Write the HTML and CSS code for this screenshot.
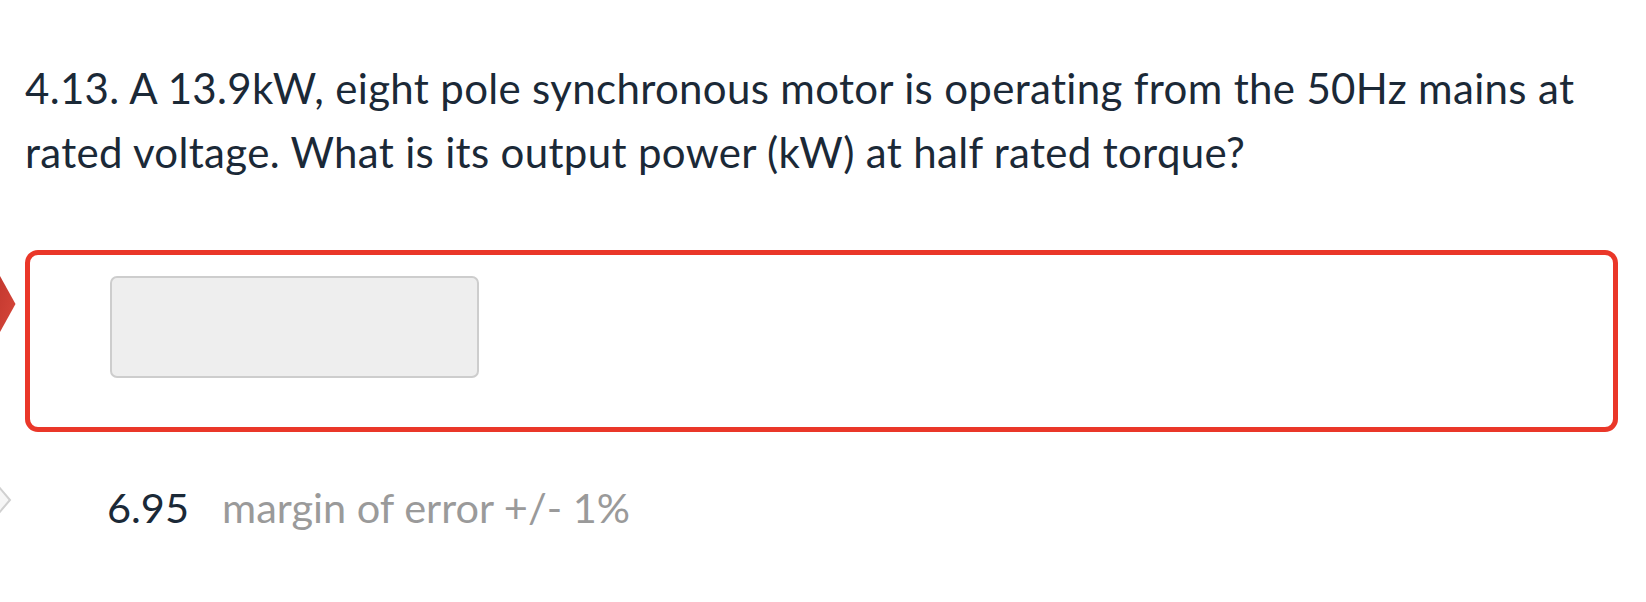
FILE: index.html
```html
<!DOCTYPE html>
<html>
<head>
<meta charset="utf-8">
<link rel="stylesheet" href="styles.css">
</head>
<body>
<div class="page">
  <div class="question">4.13. A 13.9kW, eight pole synchronous motor is operating from the 50Hz mains at rated voltage. What is its output power (kW) at half rated torque?</div>
  <div class="answer-wrap">
    <svg class="arrow-wrong" width="18" height="60" viewBox="0 0 18 60">
      <defs>
        <linearGradient id="rg" x1="0" y1="0" x2="1" y2="1">
          <stop offset="0" stop-color="#c4392f"/>
          <stop offset="1" stop-color="#d7473b"/>
        </linearGradient>
      </defs>
      <polygon points="0,1 15.5,29 0,57" fill="url(#rg)"/>
    </svg>
    <div class="answer-box">
      <div class="input"></div>
    </div>
  </div>
  <div class="correct-row">
    <svg class="arrow-correct" width="14" height="32" viewBox="0 0 14 32">
      <polygon points="-2,1 10,15 -2,29" fill="#f6f6f6" stroke="#d0d0d0" stroke-width="2"/>
    </svg>
    <span class="value">6.95</span>
    <span class="margin">margin of error +/- 1%</span>
  </div>
</div>
</body>
</html>
```

FILE: styles.css
```css
html, body {
  margin: 0;
  padding: 0;
  background: #ffffff;
}
body {
  font-family: Lato, "Open Sans", sans-serif;
  color: #1b2937;
}
.page {
  padding: 56px 28px 0 25px;
}
.question {
  font-size: 42px;
  letter-spacing: 0.33px;
  line-height: 64px;
}
.answer-wrap {
  position: relative;
  margin-top: 66px;
}
.arrow-wrong {
  position: absolute;
  left: -25px;
  top: 25px;
  display: block;
}
.answer-box {
  box-sizing: border-box;
  width: 1593px;
  height: 182px;
  border: 5px solid #ea3729;
  border-radius: 13px;
  padding: 21px 0 0 80px;
}
.input {
  box-sizing: border-box;
  width: 369px;
  height: 102px;
  background: #eeeeee;
  border: 2px solid #cdcdcd;
  border-radius: 7px;
}
.correct-row {
  position: relative;
  display: flex;
  align-items: baseline;
  gap: 33px;
  margin-top: 43px;
  padding-left: 82px;
  font-size: 41.5px;
  line-height: 64px;
}
.arrow-correct {
  position: absolute;
  left: -25px;
  top: 10px;
  display: block;
}
.value {
  color: #1b2937;
}
.margin {
  color: #9a9a9a;
}
```
